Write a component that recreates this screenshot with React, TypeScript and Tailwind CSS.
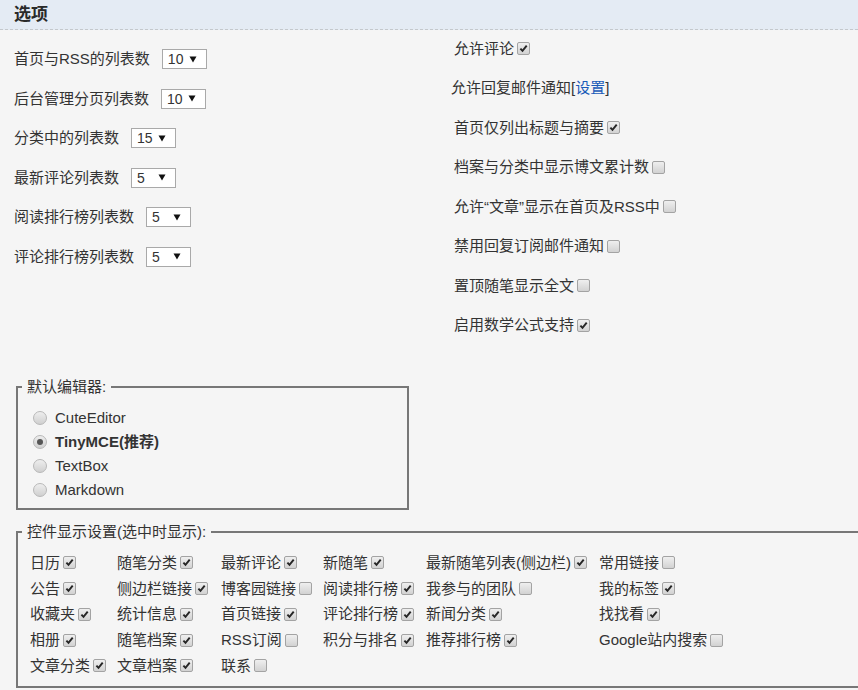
import React from "react";

function Box({ checked }: { checked: boolean }) {
  return (
    <span className="inline-flex w-[13px] h-[13px] shrink-0 items-center justify-center rounded-[2px] border border-[#a3a3a3] bg-linear-to-b from-[#efefef] to-[#d2d2d2]">
      {checked && (
        <svg width="9" height="9" viewBox="0 0 9 9">
          <path d="M1.4 4.6 L3.5 6.9 L7.7 1.6" stroke="#262626" strokeWidth="1.9" fill="none" />
        </svg>
      )}
    </span>
  );
}

function Select({ value }: { value: string }) {
  return (
    <span className="ml-[12px] inline-flex h-[20px] w-[45px] items-center justify-between border border-[#a9a9a9] bg-white pl-[5px] pr-[9px] text-[14px] leading-[18px]">
      <span>{value}</span>
      <svg width="8" height="7" viewBox="0 0 8 7">
        <path d="M0.5 0.5 L7.5 0.5 L4 6.5 Z" fill="#111" />
      </svg>
    </span>
  );
}

function Radio({ checked }: { checked: boolean }) {
  return (
    <span className="inline-flex h-[14px] w-[14px] items-center justify-center rounded-full border border-[#b8b8b8] bg-linear-to-b from-[#eeeeee] to-[#d0d0d0]">
      {checked && <span className="h-[6px] w-[6px] rounded-full bg-[#555]" />}
    </span>
  );
}

const leftRows: [string, string][] = [
  ["首页与RSS的列表数", "10"],
  ["后台管理分页列表数", "10"],
  ["分类中的列表数", "15"],
  ["最新评论列表数", "5"],
  ["阅读排行榜列表数", "5"],
  ["评论排行榜列表数", "5"],
];

const rightRows: [string, boolean][] = [
  ["允许评论", true],
  ["", false],
  ["首页仅列出标题与摘要", true],
  ["档案与分类中显示博文累计数", false],
  ["允许“文章”显示在首页及RSS中", false],
  ["禁用回复订阅邮件通知", false],
  ["置顶随笔显示全文", false],
  ["启用数学公式支持", true],
];

const grid: ([string, boolean] | null)[][] = [
  [["日历", true], ["随笔分类", true], ["最新评论", true], ["新随笔", true], ["最新随笔列表(侧边栏)", true], ["常用链接", false]],
  [["公告", true], ["侧边栏链接", true], ["博客园链接", false], ["阅读排行榜", true], ["我参与的团队", false], ["我的标签", true]],
  [["收藏夹", true], ["统计信息", true], ["首页链接", true], ["评论排行榜", true], ["新闻分类", true], ["找找看", true]],
  [["相册", true], ["随笔档案", true], ["RSS订阅", false], ["积分与排名", true], ["推荐排行榜", true], ["Google站内搜索", false]],
  [["文章分类", true], ["文章档案", true], ["联系", false], null, null, null],
];

export default function App() {
  return (
    <div className="h-[690px] w-[858px] overflow-hidden bg-[#f5f5f5] font-['Liberation_Sans','Noto_Sans_CJK_SC',sans-serif] text-[15px] text-[#333]">
      <div className="flex h-[30px] items-center border-b border-dashed border-[#c4c8cc] bg-[#e4ebf4] pl-[14px]">
        <span className="text-[17px] font-bold leading-[20px] text-[#2a2a2a]">选项</span>
      </div>
      <div className="flex">
        <div className="w-[437px] pl-[14px] pt-[9.5px]">
          {leftRows.map(([label, v]) => (
            <div key={label} className="flex h-[39.5px] items-center leading-[20px]">
              <span>{label}</span>
              <Select value={v} />
            </div>
          ))}
        </div>
        <div className="-mt-[1px] pl-[14px]">
          {rightRows.map(([label, c], i) =>
            i === 1 ? (
              <div key={i} className="flex h-[39.5px] items-center leading-[20px]">
                <span>
                  允许回复邮件通知[<span className="text-[#1a5bb8]">设置</span>]
                </span>
              </div>
            ) : (
              <div key={i} className="flex h-[39.5px] items-center gap-[3px] pl-[3px] leading-[20px]">
                <span>{label}</span>
                <Box checked={c} />
              </div>
            )
          )}
        </div>
      </div>
      <div className="ml-[16px] mt-[32px]">
        <fieldset className="w-[393px] border-2 border-[#777] pb-[6px]">
          <legend className="ml-[4px] px-[5px] leading-[20px]">默认编辑器:</legend>
          <div className="pl-[15px] pt-[9px]">
            {[
              ["CuteEditor", false],
              ["TinyMCE(推荐)", true],
              ["TextBox", false],
              ["Markdown", false],
            ].map(([t, c]) => (
              <div key={t as string} className="flex h-[24px] items-center leading-[20px]">
                <Radio checked={c as boolean} />
                <span className={"ml-[8px] " + (c ? "font-bold" : "")}>{t as string}</span>
              </div>
            ))}
          </div>
        </fieldset>
        <fieldset className="mt-[12px] w-[900px] border-2 border-[#777] pb-[7px]">
          <legend className="ml-[4px] px-[5px] leading-[20px]">控件显示设置(选中时显示):</legend>
          <div className="grid grid-cols-[87px_104px_102px_103px_173px_200px] pl-[12px] pt-[8px]">
            {grid.flatMap((row, r) =>
              row.map((cell, c) => (
                <div key={r + "-" + c} className="flex h-[25.75px] items-center gap-[3px] leading-[20px]">
                  {cell && (
                    <>
                      <span>{cell[0]}</span>
                      <Box checked={cell[1]} />
                    </>
                  )}
                </div>
              ))
            )}
          </div>
        </fieldset>
      </div>
    </div>
  );
}
